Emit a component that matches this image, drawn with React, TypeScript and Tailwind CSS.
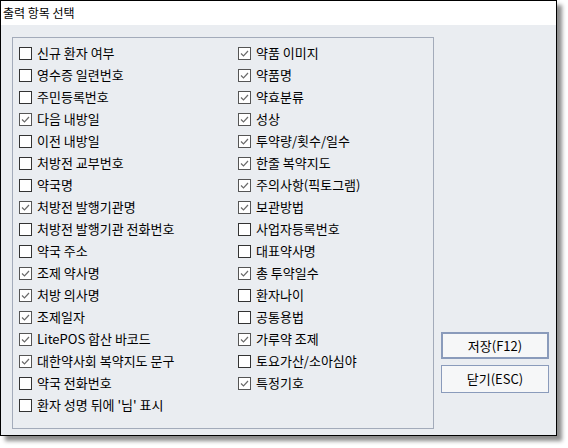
import React from "react";

type Item = { label: string; checked: boolean };

const left: Item[] = [
  { label: "신규 환자 여부", checked: false },
  { label: "영수증 일련번호", checked: false },
  { label: "주민등록번호", checked: false },
  { label: "다음 내방일", checked: true },
  { label: "이전 내방일", checked: false },
  { label: "처방전 교부번호", checked: false },
  { label: "약국명", checked: false },
  { label: "처방전 발행기관명", checked: true },
  { label: "처방전 발행기관 전화번호", checked: false },
  { label: "약국 주소", checked: false },
  { label: "조제 약사명", checked: true },
  { label: "처방 의사명", checked: true },
  { label: "조제일자", checked: true },
  { label: "LitePOS 합산 바코드", checked: true },
  { label: "대한약사회 복약지도 문구", checked: true },
  { label: "약국 전화번호", checked: false },
  { label: "환자 성명 뒤에 '님' 표시", checked: false },
];

const right: Item[] = [
  { label: "약품 이미지", checked: true },
  { label: "약품명", checked: true },
  { label: "약효분류", checked: true },
  { label: "성상", checked: true },
  { label: "투약량/횟수/일수", checked: true },
  { label: "한줄 복약지도", checked: true },
  { label: "주의사항(픽토그램)", checked: true },
  { label: "보관방법", checked: true },
  { label: "사업자등록번호", checked: false },
  { label: "대표약사명", checked: false },
  { label: "총 투약일수", checked: true },
  { label: "환자나이", checked: false },
  { label: "공통용법", checked: false },
  { label: "가루약 조제", checked: true },
  { label: "토요가산/소아심야", checked: false },
  { label: "특정기호", checked: true },
];

function Check({ item }: { item: Item }) {
  return (
    <div className="flex h-[22px] items-center">
      <div
        className={
          "flex h-[13px] w-[13px] shrink-0 items-center justify-center bg-white border " +
          (item.checked ? "border-[#555555]" : "border-[#333333]")
        }
      >
        {item.checked && (
          <svg width="11" height="11" viewBox="0 0 11 11">
            <polyline
              points="2,5.5 4.5,8 9,3"
              fill="none"
              stroke="#6b6b6b"
              strokeWidth="1.2"
            />
          </svg>
        )}
      </div>
      <span className="ml-[5px] -mt-[2px] whitespace-nowrap text-[13px] leading-none text-black">
        {item.label}
      </span>
    </div>
  );
}

export default function App() {
  return (
    <div
      className="relative h-[448px] w-[568px] bg-white"
      style={{ fontFamily: '"Noto Sans CJK KR", "Noto Sans", sans-serif' }}
    >
      <div className="flex h-[436px] w-[557px] flex-col border border-black bg-[#eaedf1] shadow-[5px_5px_4px_rgba(0,0,0,0.45)]">
        <div className="flex h-[24px] items-center bg-white pl-[2px] text-[12px] text-black">
          출력 항목 선택
        </div>
        <div className="flex flex-1 pl-[11px] pt-[12px]">
          <div className="flex h-[392px] w-[422px] border border-[#a3abba] pl-[6px] pt-[4px]">
            <div className="flex w-[219px] flex-col">
              {left.map((it) => (
                <Check key={it.label} item={it} />
              ))}
            </div>
            <div className="flex flex-col">
              {right.map((it) => (
                <Check key={it.label} item={it} />
              ))}
            </div>
          </div>
          <div className="ml-[7px] flex flex-col pt-[295px]">
            <button className="flex h-[27px] w-[108px] items-center justify-center border-2 border-[#8a9bbb] bg-[#f6f7f8] text-[13px] text-black">
              저장(F12)
            </button>
            <button className="mt-[6px] flex h-[28px] w-[108px] items-center justify-center border border-[#8a9bbb] bg-[#f6f7f8] text-[13px] text-black">
              닫기(ESC)
            </button>
          </div>
        </div>
      </div>
    </div>
  );
}
